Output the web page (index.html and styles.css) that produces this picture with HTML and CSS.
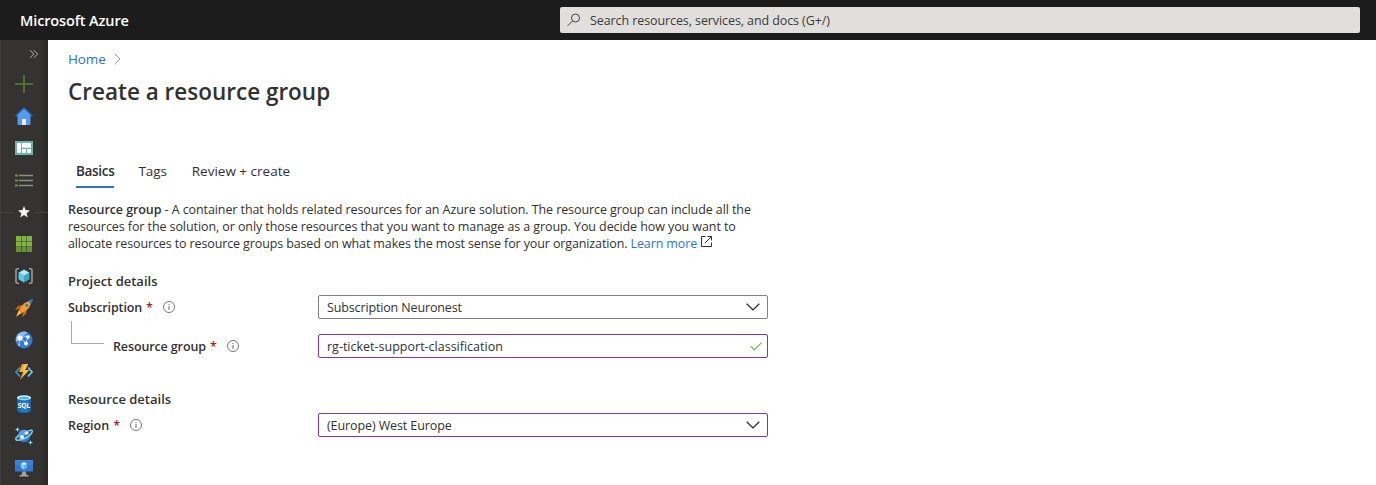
FILE: index.html
```
<!DOCTYPE html>
<html lang="en">
<head>
<meta charset="utf-8">
<title>Create a resource group - Microsoft Azure</title>
<link rel="stylesheet" href="styles.css">
</head>
<body>
<header class="topbar">
  <span class="brand">Microsoft Azure</span>
  <div class="search">
    <svg width="14" height="14" viewBox="0 0 14 14" fill="none" stroke="#444" stroke-width="1"><circle cx="8.5" cy="5" r="4"/><path d="M5.6 7.9L.8 12.7"/></svg>
    <span class="search-text">Search resources, services, and docs (G+/)</span>
  </div>
</header>
<div class="shell">
  <nav class="rail">
    <div class="expand"><svg width="10" height="10" viewBox="0 0 10 10" fill="none" stroke="#b5b5b4" stroke-width="1"><path d="M1 1.2L4.8 5 1 8.8M4.8 1.2L8.6 5 4.8 8.8"/></svg></div>
    <div class="item"><svg width="18" height="18" viewBox="0 0 18 18"><path d="M9 0v18M0 9h18" stroke="#55802f" stroke-width="1.6"/></svg></div>
    <div class="item"><svg width="18" height="18" viewBox="0 0 18 18"><path d="M2.5 8v9a1 1 0 0 0 1 1h11a1 1 0 0 0 1-1V8L9 2z" fill="#5a9aec"/><path d="M9 0L0 8.6l1 1.2L9 3l8 6.8 1-1.2z" fill="#2469b4"/><path d="M9 2.3L2 8.5h14z" fill="#5a9aec"/><path d="M7 12h4v6H7z" fill="#eee"/></svg></div>
    <div class="item"><svg width="18" height="14" viewBox="0 0 18 14"><path d="M0 0h18v14H0z" fill="#6bb5a8"/><path d="M2 2h4v10H2zM7 2h9v5H7zM7 8h4v4H7zM12 8h4v4h-4z" fill="#fff"/><path d="M2 11h4v1H2zM7 6h9v1H7z" fill="#d9eeee"/></svg></div>
    <div class="item"><svg width="18" height="13" viewBox="0 0 18 13"><path d="M4 1.5h14M4 6.5h14M4 11.5h14" stroke="#8b8b87" stroke-width="1.3"/><path d="M0 .5h3v2H0zM0 5.5h3v2H0zM0 10.5h3v2H0z" fill="#659a30"/></svg></div>
    <div class="item favorites"><i class="rule"></i><svg width="12" height="12" viewBox="0 0 12 12"><path d="M6 0l1.6 4.1 4.4.3-3.4 2.8 1.1 4.3L6 9.1l-3.7 2.4 1.1-4.3L0 4.4l4.4-.3z" fill="#f4f4f3"/></svg><i class="rule"></i></div>
    <div class="item"><svg width="16" height="16" viewBox="0 0 16 16"><path d="M0 0h5v5H0zM5.5 0h5v5h-5zM11 0h5v5h-5zM0 5.5h5v5H0zM5.5 5.5h5v5h-5zM11 5.5h5v5h-5z" fill="#80b53e"/><path d="M0 11h5v5H0zM5.5 11h5v5h-5zM11 11h5v5h-5z" fill="#65932f"/></svg></div>
    <div class="item"><svg width="18" height="16" viewBox="0 0 18 16"><path d="M4 .8H2.2Q1 .8 1 2v12q0 1.2 1.2 1.2H4M14 .8h1.8Q17 .8 17 2v12q0 1.2-1.2 1.2H14" fill="none" stroke="#999" stroke-width="1.6"/><path d="M9 1.6l5.5 3.2L9 8 3.500 4.800z" fill="#a1edf7"/><path d="M3.500 4.800L9 8v6.400l-5.500-3.200z" fill="#61c8e5"/><path d="M14.500 4.800L9 8v6.400l5.500-3.200z" fill="#38a5cb"/></svg></div>
    <div class="item"><svg width="18" height="18" viewBox="0 0 18 18"><path d="M8 6L3 7 0 11l4-1zM12 10l-1 5-4 3 1-4z" fill="#c96a19"/><path d="M16 2Q9 2 4 11l3 3Q16 10 16 2z" fill="#f79a34"/><path d="M4 11l3 3-2 1-4 3 2-5z" fill="#f6bb4b"/><path d="M13 2q3-2 5-2 0 2-2 5z" fill="#267dc7"/><circle cx="11.8" cy="6.2" r="1.5" fill="#287ec6"/></svg></div>
    <div class="item"><svg width="18" height="18" viewBox="0 0 18 18"><circle cx="9" cy="9" r="8.5" fill="#3478d2"/><path d="M2 4Q5 0 10 .5 14 1 10 4L4 9 1 11Q0 8 2 4z" fill="#86baf1"/><path d="M5 7l6 5M5 7l7-2M11 12l2-6M5 7L4 13" stroke="#a9d0f8" stroke-width="1"/><circle cx="5" cy="7" r="2.6" fill="#fff"/><circle cx="13" cy="6" r="1.8" fill="#fff"/><circle cx="11" cy="12.5" r="2" fill="#fff"/><circle cx="4" cy="14" r="1" fill="#a9d0f8"/></svg></div>
    <div class="item"><svg width="18" height="18" viewBox="0 0 18 18"><path d="M5 4.500L1 9l4 4.500" fill="none" stroke="#3a8fd4" stroke-width="1.8"/><path d="M13 4.500L17 9l-4 4.500" fill="none" stroke="#62c8e6" stroke-width="1.8"/><path d="M7 1h6l-3 6h4L5 17l3-8H4z" fill="#f7a72b"/><path d="M10 1h3l-3 6h4l-6 6 2-5H7z" fill="#ffc44d"/></svg></div>
    <div class="item"><svg width="14" height="18" viewBox="0 0 14 18"><path d="M0 2.5v13Q1 18 7 18t7-2.5v-13z" fill="#1767b7"/><path d="M3 3h8v14H3z" fill="#2478c9"/><ellipse cx="7" cy="2.7" rx="7" ry="2.5" fill="#e8f4f7"/><ellipse cx="7" cy="3" rx="5.3" ry="1.5" fill="#49bddd"/><text class="sql" x="7" y="12.6">SQL</text></svg></div>
    <div class="item"><svg width="18" height="18" viewBox="0 0 18 18"><circle cx="9" cy="9" r="6.2" fill="#3479d2"/><path d="M4 5q4-4 9-1-2 5-9 6z" fill="#5a9df0"/><path d="M4 8L1 11q-1 4 7 1T17 5q1-3-4-1" fill="none" stroke="#74d1ee" stroke-width="1.6"/><circle cx="7" cy="10" r="2" fill="#f2f8ff"/><path d="M9 6l3-2 2 2-3 2z" fill="#e7f3ff"/><path d="M2.5 0l.8 1.800 1.700.7-1.700.8L2.500 5l-.8-1.700L0 2.500l1.700-.7zM15.500 13l.7 1.700 1.800.8-1.800.7-.7 1.800-.7-1.800-1.800-.7 1.800-.8z" fill="#75dcf4"/></svg></div>
    <div class="item"><svg width="18" height="18" viewBox="0 0 18 18"><path d="M0 1h18v11.500H0z" fill="#3477cf"/><path d="M0 1h18v5H0z" fill="#427fd5"/><path d="M7.200 12.500h3.600l.7 3.500h2v1.500h-9V16h2z" fill="#a4a4a4"/><path d="M9 3l3.200 1.800L9 6.700 5.800 4.800z" fill="#b7f5fc"/><path d="M5.800 4.800L9 6.700v4L5.800 8.800z" fill="#78d7ec"/><path d="M12.200 4.800L9 6.700v4l3.200-1.900z" fill="#4dbce3"/></svg></div>
  </nav>
  <main class="page">
    <div class="crumbs"><a class="home">Home</a><svg width="7" height="12" viewBox="0 0 7 12" fill="none" stroke="#999"><path d="M.7 1L6 6 .7 11"/></svg></div>
    <h1 class="title"><span class="title-text">Create a resource group</span></h1>
    <div class="tabs"><span class="tab active">Basics</span><span class="tab tags">Tags</span><span class="tab review">Review + create</span></div>
    <p class="intro"><span class="l1"><b>Resource group</b> - A container that holds related resources for an Azure solution. The resource group can include all the</span><br><span class="l2">resources for the solution, or only those resources that you want to manage as a group. You decide how you want to</span><br><span class="l3">allocate resources to resource groups based on what makes the most sense for your organization. <a>Learn more</a></span><svg class="ext" width="11" height="11" viewBox="0 0 11 11" fill="none" stroke="#333"><path d="M4.500.5h-4v10h10v-4M6.500.5h4v4M10.500.5L3.800 7.200"/></svg></p>
    <h2 class="section"><span class="s1">Project details</span></h2>
    <div class="row"><label class="label"><span class="k1">Subscription</span><i class="req">*</i><svg class="info" width="12" height="12" viewBox="0 0 12 12" fill="none" stroke="#666"><circle cx="6" cy="6" r="5.5" stroke-width=".9"/><path d="M6 5v4M6 3v1"/></svg></label>
      <div class="field"><span class="v1">Subscription Neuronest</span><svg width="14" height="8" viewBox="0 0 14 8" fill="none" stroke="#222" stroke-width="1.2"><path d="M.7.8L7 7 13.3.8"/></svg></div></div>
    <div class="row nested"><label class="label"><i class="elbow"></i><span class="k2">Resource group</span><i class="req">*</i><svg class="info" width="12" height="12" viewBox="0 0 12 12" fill="none" stroke="#666"><circle cx="6" cy="6" r="5.5" stroke-width=".9"/><path d="M6 5v4M6 3v1"/></svg></label>
      <div class="field edited valid"><span class="v2">rg-ticket-support-classification</span><svg width="12" height="9" viewBox="0 0 12 9" fill="none" stroke="#76ad45" stroke-width="1.1"><path d="M.5 4.2L4.2 8 11.7.6"/></svg></div></div>
    <h2 class="section second"><span class="s2">Resource details</span></h2>
    <div class="row"><label class="label"><span class="k3">Region</span><i class="req">*</i><svg class="info" width="12" height="12" viewBox="0 0 12 12" fill="none" stroke="#666"><circle cx="6" cy="6" r="5.5" stroke-width=".9"/><path d="M6 5v4M6 3v1"/></svg></label>
      <div class="field edited"><span class="v3">(Europe) West Europe</span><svg width="14" height="8" viewBox="0 0 14 8" fill="none" stroke="#222" stroke-width="1.2"><path d="M.7.8L7 7 13.3.8"/></svg></div></div>
  </main>
</div>
</body>
</html>
```
FILE: styles.css
```
* { box-sizing: border-box; }
body { margin: 0; height: 485px; overflow: hidden; background: #fff; color: #323130; font: 12.5px/17px "Open Sans", "Noto Sans", sans-serif; white-space: nowrap; }
svg { display: block; flex: none; }
i { font-style: normal; }
.topbar { height: 40px; background: #1c1c1c; display: flex; align-items: center; justify-content: space-between; padding: 0 16px 0 20px; }
.brand { color: #fff; font-size: 14.5px; font-weight: 600; line-height: 20px; letter-spacing: -.13px; padding-top: 1px; }
.search { width: 800px; height: 26px; background: #e1dfdd; border-radius: 2px; display: flex; align-items: center; gap: 9px; padding-left: 7px; color: #3b3a39; }
.search-text { letter-spacing: -.09px; }
.shell { display: flex; height: 445px; }
.rail { width: 48px; background: linear-gradient(90deg, #484745 0, #343331 1px, #343331 40px, #292826 48px); overflow: hidden; flex: none; }
.expand { height: 28px; padding: 9px 9px 0 29px; }
.item { height: 32px; display: flex; align-items: center; justify-content: center; }
.favorites { justify-content: space-between; }
.rule { width: 13px; height: 1px; background: #444341; }
.sql { font: 700 6.6px "Open Sans", sans-serif; fill: #fff; text-anchor: middle; }
.page { flex: 1; padding: 9px 20px 0; }
.crumbs { height: 20px; display: flex; align-items: center; gap: 8px; font-size: 13.5px; letter-spacing: -.1px; }
a { color: #2b74cb; }
.title { margin: 7px 0 0; height: 32px; font-size: 22.5px; line-height: 32px; font-weight: 600; }
.tabs { margin: 47px 0 0 8px; height: 33px; display: flex; gap: 24px; font-size: 13.5px; line-height: 33px; }
.active { font-weight: 600; border-bottom: 2px solid #2b74cb; letter-spacing: -.32px; }
.tags { letter-spacing: -.1px; margin-right: 1px; }
.intro { margin: 13px 0 0; height: 51px; }
.intro b, .section, .label { font-weight: 600; }
.l1 { letter-spacing: -.085px; }
.l2 { letter-spacing: -.083px; }
.l3 { letter-spacing: -.122px; }
.ext { display: inline-block; margin-left: 4px; vertical-align: 1px; }
.section { margin: 19px 0 0; height: 20px; line-height: 20px; font-size: 13px; }
.second { margin-top: 31px; }
.row { display: flex; height: 24px; width: 700px; }
.section + .row { margin-top: 4px; }
.row.nested { margin-top: 15px; }
.label { width: 250px; display: flex; align-items: center; flex: none; }
.k1, .k2 { letter-spacing: -.12px; }
.v1 { letter-spacing: -.14px; }
.v3 { letter-spacing: -.1px; }
.req { color: #a4262c; margin-left: 4px; }
.info { margin-left: 10px; }
.elbow { width: 33px; height: 23px; margin: -28px 9px 0 3px; border: solid #a9a8a7; border-width: 0 0 1px 1px; }
.field { width: 450px; height: 24px; border: 1px solid #83817f; border-radius: 2px; padding: 0 7px 0 8px; display: flex; align-items: center; justify-content: space-between; }
.edited { border-color: #8037a7; }
.valid { padding-right: 5px; }
```
